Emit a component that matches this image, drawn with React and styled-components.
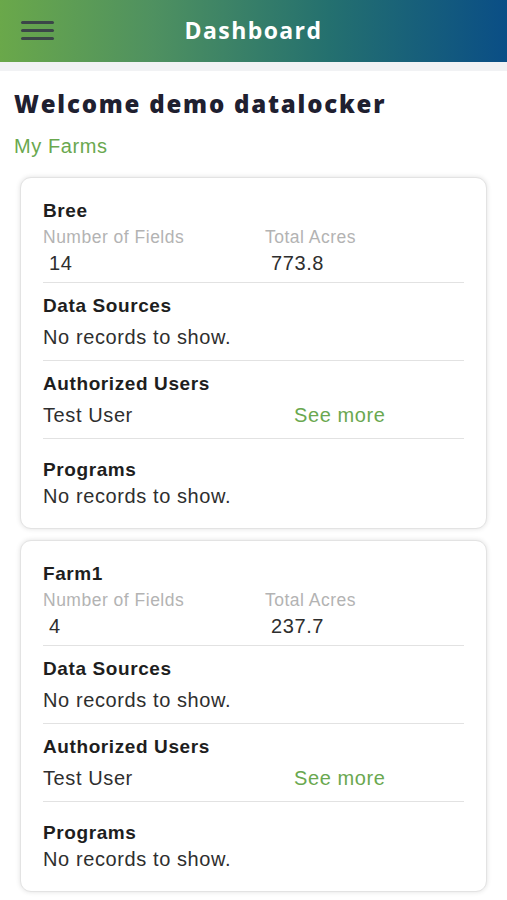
import React from 'react';
import styled, { createGlobalStyle } from 'styled-components';

const GlobalStyle = createGlobalStyle`
  html, body {
    margin: 0;
    padding: 0;
    background: #ffffff;
  }
  body {
    font-family: "Liberation Sans", Arial, sans-serif;
  }
`;

const Page = styled.div`
  width: 507px;
  min-height: 900px;
  background: #ffffff;
`;

const TopBar = styled.header`
  height: 62px;
  display: grid;
  grid-template-columns: 62px 1fr 62px;
  align-items: center;
  background: linear-gradient(to right, #6aa84a 0%, #4f9160 30%, #24706f 65%, #0a4e86 100%);
  border-bottom: 9px solid #f1f2f4;
`;

const MenuButton = styled.button`
  width: 33px;
  height: 19px;
  margin: 0 0 2px 21px;
  padding: 0;
  border: none;
  background: none;
  display: flex;
  flex-direction: column;
  justify-content: space-between;
  cursor: pointer;

  span {
    display: block;
    height: 3px;
    border-radius: 2px;
    background: #3b4648;
  }
`;

const Title = styled.h1`
  margin: 0 0 2px;
  text-align: center;
  color: #ffffff;
  font-family: "Open Sans", "Noto Sans", sans-serif;
  font-weight: 700;
  font-size: 23px;
  letter-spacing: 1.4px;
`;

const Main = styled.main`
  padding: 17px 20px 0 14px;
`;

const Welcome = styled.h2`
  margin: 0;
  color: #1f2030;
  font-family: "Open Sans", "Noto Sans", sans-serif;
  font-weight: 800;
  font-size: 24px;
  line-height: 32px;
  letter-spacing: 1.8px;
`;

const SubTitle = styled.h3`
  margin: 13px 0 0;
  color: #6aa84f;
  font-weight: 400;
  font-size: 20px;
  line-height: 26px;
  letter-spacing: 0.6px;
`;

const CardList = styled.div`
  display: flex;
  flex-direction: column;
  gap: 11px;
  margin-top: 18px;
  padding-left: 6px;
`;

const Card = styled.section`
  border: 1px solid #e3e3e3;
  border-radius: 11px;
  box-shadow: 0 0 5px rgba(0, 0, 0, 0.12);
  background: #ffffff;
  padding: 20px 22px 19px 22px;
`;

const Heading = styled.div`
  color: #1e1e1e;
  font-weight: 700;
  font-size: 19px;
  line-height: 26px;
  letter-spacing: 0.6px;
`;

const Text = styled.div`
  color: #2e2e2e;
  font-size: 20px;
  line-height: 26px;
  letter-spacing: 0.6px;
`;

const Stats = styled.div`
  display: grid;
  grid-template-columns: 222px 1fr;
`;

const StatLabel = styled.div`
  color: #b3b3b3;
  font-size: 17.5px;
  line-height: 26px;
  letter-spacing: 0.5px;
`;

const StatValue = styled(Text)`
  padding-left: 6px;
`;

const Divider = styled.hr`
  margin: 6px 0 0;
  border: none;
  border-top: 1px solid #e2e2e2;
`;

const Block = styled.div`
  padding: ${(p) => (p.$last ? '18px 0 0' : '10px 0 10px')};
  border-bottom: ${(p) => (p.$last ? 'none' : '1px solid #e2e2e2')};
`;

const Body = styled.div`
  margin-top: ${(p) => (p.$tight ? '0' : '5px')};
`;

const UserRow = styled.div`
  display: grid;
  grid-template-columns: 251px 1fr;
`;

const SeeMore = styled.a`
  color: #6aa84f;
  font-size: 20px;
  line-height: 26px;
  letter-spacing: 0.6px;
  text-decoration: none;
  cursor: pointer;
`;

const farms = [
  { name: 'Bree', fields: '14', acres: '773.8', user: 'Test User' },
  { name: 'Farm1', fields: '4', acres: '237.7', user: 'Test User' },
];

function FarmCard({ farm }) {
  return (
    <Card>
      <Heading>{farm.name}</Heading>
      <Stats>
        <StatLabel>Number of Fields</StatLabel>
        <StatLabel>Total Acres</StatLabel>
        <StatValue>{farm.fields}</StatValue>
        <StatValue>{farm.acres}</StatValue>
      </Stats>
      <Divider />
      <Block>
        <Heading>Data Sources</Heading>
        <Body>
          <Text>No records to show.</Text>
        </Body>
      </Block>
      <Block>
        <Heading>Authorized Users</Heading>
        <Body>
          <UserRow>
            <Text>{farm.user}</Text>
            <SeeMore>See more</SeeMore>
          </UserRow>
        </Body>
      </Block>
      <Block $last>
        <Heading>Programs</Heading>
        <Body $tight>
          <Text>No records to show.</Text>
        </Body>
      </Block>
    </Card>
  );
}

export default function App() {
  return (
    <Page>
      <GlobalStyle />
      <TopBar>
        <MenuButton aria-label="menu">
          <span />
          <span />
          <span />
        </MenuButton>
        <Title>Dashboard</Title>
        <div />
      </TopBar>
      <Main>
        <Welcome>Welcome demo datalocker</Welcome>
        <SubTitle>My Farms</SubTitle>
        <CardList>
          {farms.map((farm) => (
            <FarmCard key={farm.name} farm={farm} />
          ))}
        </CardList>
      </Main>
    </Page>
  );
}
